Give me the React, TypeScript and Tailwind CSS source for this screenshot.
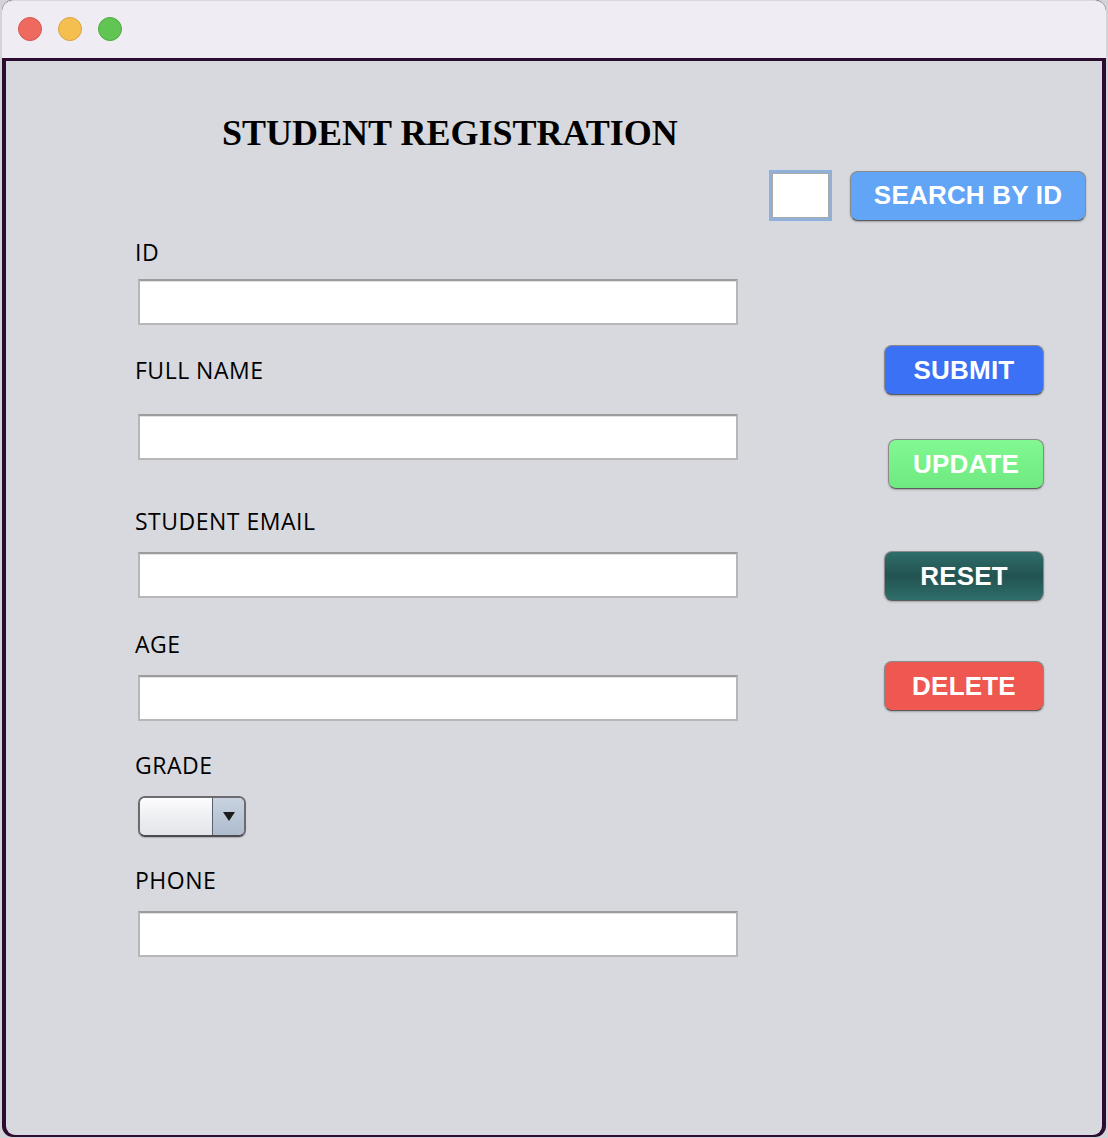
const Field = ({ label, top, gap }: { label: string; top: number; gap: number }) => {
  return (
    <div className="flex flex-col" style={{ marginTop: top }}>
      <label className="h-[24px] leading-[24px] pl-[3px] text-[23px] tracking-[0.5px] text-black font-['Open_Sans',sans-serif]">
        {label}
      </label>
      <input
        type="text"
        className="w-[600px] h-[46px] ml-[6px] bg-white border-2 border-[#b7b7b7] border-t-[#9c9c9c] shadow-[inset_0_1px_0_#e2e2e2] outline-none"
        style={{ marginTop: gap }}
      />
    </div>
  );
};

const ActionButton = ({
  text,
  className,
}: {
  text: string;
  className: string;
}) => {
  return (
    <button
      className={
        "h-[50px] rounded-[8px] border border-[#8a8a8a] border-b-[#5b5b5b] shadow-[0_1px_2px_rgba(0,0,0,0.25)] text-white font-bold text-[26px] tracking-[0.2px] font-['Liberation_Sans',Arial,sans-serif] " +
        className
      }
    >
      {text}
    </button>
  );
};

export default function App() {
  return (
    <div className="w-[1108px] h-[1138px] bg-[#d4d4d8] font-['Liberation_Sans',sans-serif]">
      <div className="ml-[2px] w-[1104px] h-[1137px] rounded-[11px] bg-[#2c0b30] overflow-hidden flex flex-col">
        {/* title bar */}
        <div className="h-[58px] bg-[#efecf3] flex items-center gap-[16px] pl-[16px] pb-[1px] border-t border-[#d9d6dd] rounded-t-[11px]">
          <span className="w-[24px] h-[24px] rounded-full bg-[#ee6a5f] border border-[#d5574c]" />
          <span className="w-[24px] h-[24px] rounded-full bg-[#f5bf4f] border border-[#d9a33c]" />
          <span className="w-[24px] h-[24px] rounded-full bg-[#61c554] border border-[#4eaa40]" />
        </div>

        {/* content */}
        <div className="flex-1 mx-[4px] mt-[3px] mb-[2px] bg-[#d8d9de] rounded-b-[9px] flex flex-col">
          <h1 className="pt-[54px] pl-[216px] text-[36px] leading-none font-bold text-black font-['Liberation_Serif',serif] h-[90px] box-border">
            STUDENT REGISTRATION
          </h1>

          <div className="mt-[19px] flex justify-end items-center pr-[16px] gap-[18px]">
            <input
              type="text"
              className="w-[63px] h-[51px] bg-white border-[3px] border-[#8fb0d9] shadow-[inset_0_0_0_1px_#a9a9a9] outline-none"
            />
            <ActionButton text="SEARCH BY ID" className="w-[236px] bg-[#62a5f7]" />
          </div>

          <div className="flex">
            <div className="ml-[126px] flex flex-col">
              <Field label="ID" top={19} gap={15} />
              <Field label="FULL NAME" top={33} gap={32} />
              <Field label="STUDENT EMAIL" top={49} gap={19} />
              <Field label="AGE" top={34} gap={19} />

              <div className="flex flex-col mt-[32px]">
                <label className="h-[24px] leading-[24px] pl-[3px] text-[23px] tracking-[0.5px] text-black font-['Open_Sans',sans-serif]">
                  GRADE
                </label>
                <div className="mt-[19px] ml-[6px] w-[108px] h-[41px] rounded-[7px] border-2 border-[#6b6b70] border-b-[#4a4a50] flex overflow-hidden shadow-[0_1px_1px_rgba(0,0,0,0.2)]">
                  <div className="flex-1 bg-gradient-to-b from-[#fdfdfe] via-[#eeeff2] to-[#e4e5ea]" />
                  <div className="w-[32px] border-l border-[#56606e] bg-gradient-to-b from-[#c9d3e0] to-[#aebcce] flex items-center justify-center">
                    <svg width="12" height="9" viewBox="0 0 12 9">
                      <path d="M0 0 H12 L6 9 Z" fill="#1b1b1b" />
                    </svg>
                  </div>
                </div>
              </div>

              <Field label="PHONE" top={31} gap={19} />
            </div>

            <div className="ml-auto mr-[58px] mt-[124px] flex flex-col items-end">
              <ActionButton text="SUBMIT" className="w-[160px] bg-[#3a71f5]" />
              <ActionButton
                text="UPDATE"
                className="mt-[44px] w-[156px] bg-gradient-to-b from-[#82f891] to-[#6ee980]"
              />
              <ActionButton
                text="RESET"
                className="mt-[62px] w-[160px] bg-gradient-to-b from-[#2f6d6a] via-[#225351] to-[#2f6e6b]"
              />
              <ActionButton text="DELETE" className="mt-[60px] w-[160px] bg-[#ee5851]" />
            </div>
          </div>
        </div>
      </div>
    </div>
  );
}
